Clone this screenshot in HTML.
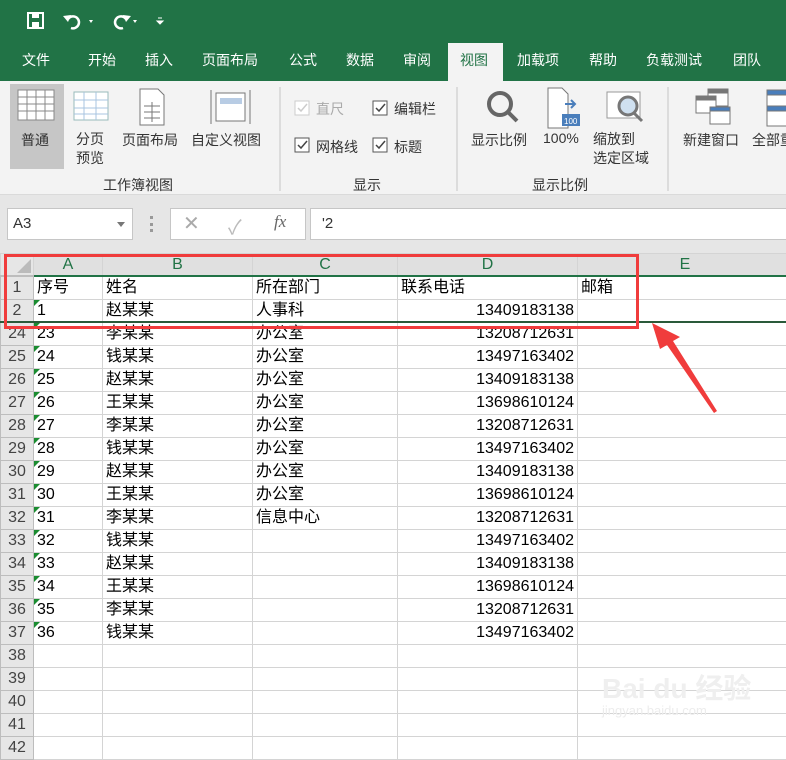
<!DOCTYPE html>
<html><head><meta charset="utf-8">
<style>
*{margin:0;padding:0;box-sizing:border-box}
body{width:786px;height:739px;overflow:hidden;background:#fff;font-family:"Liberation Sans","Noto Sans CJK SC",sans-serif;position:relative}
.g{position:absolute;left:0;top:0;width:786px;height:81px;background:#217346}
.tab{position:absolute;top:50px;color:#fff;font-size:14px}
.ab{position:absolute}
.rib{position:absolute;left:0;top:81px;width:786px;height:114px;background:#f3f3f3;border-bottom:1px solid #dadada}
.t{position:absolute;font-size:14px;color:#333;white-space:nowrap}
.fb{position:absolute;left:0;top:195px;width:786px;height:58px;background:#e6e6e6}
.box{position:absolute;background:#fff;border:1px solid #c6c6c6}
.grid{position:absolute;left:0;top:253px}
table{border-collapse:collapse;table-layout:fixed;width:792px;font-size:16px;font-family:"Liberation Sans","Noto Sans CJK SC",sans-serif}
td{border:1px solid #d4d4d4;height:23px;padding:0 3px;white-space:nowrap;overflow:hidden;line-height:21px}
td.h{background:#e6e6e6;color:#444;text-align:center;padding:0;border-color:#bdbdbd}
tr.ch td{height:21px;background:#e0e0e0;color:#217346;text-align:center;border-bottom:2px solid #217346;font-size:16px}
td.r{text-align:right}
td.n{position:relative}
td.n:before{content:"";position:absolute;left:0;top:0;border-top:6px solid #1a8c30;border-right:6px solid transparent}
td.dd{border-right:1px dashed #888}
</style></head><body>
<div class="g"></div>
<svg class="ab" style="left:26px;top:10px" width="150" height="22" viewBox="0 0 150 22">
<rect x="2" y="3" width="15" height="15" fill="none" stroke="#fff" stroke-width="2"/><rect x="6" y="3" width="7" height="5" fill="#fff"/><rect x="6" y="12" width="7" height="6" fill="#fff"/>
<path d="M42 9 a6 6 0 1 1 3 9" fill="none" stroke="#fff" stroke-width="2.5"/><path d="M37 6 l5 6 l3 -7z" fill="#fff"/>
<path d="M63 10 l4 0 l-2 3z" fill="#fff"/>
<path d="M100 9 a6 6 0 1 0 -3 9" fill="none" stroke="#fff" stroke-width="2.5"/><path d="M105 6 l-5 6 l-3 -7z" fill="#fff"/>
<path d="M107 10 l4 0 l-2 3z" fill="#fff"/>
<path d="M132 8 h4 M131 11 l3 3 l3 -3z" stroke="#fff" fill="#fff"/>
</svg>
<div class="tab" style="left:22px">文件</div><div class="tab" style="left:88px">开始</div><div class="tab" style="left:145px">插入</div><div class="tab" style="left:202px">页面布局</div><div class="tab" style="left:289px">公式</div><div class="tab" style="left:346px">数据</div><div class="tab" style="left:403px">审阅</div>
<div class="ab" style="left:448px;top:43px;width:55px;height:38px;background:#f3f3f3"></div>
<div class="tab" style="left:460px;color:#217346">视图</div><div class="tab" style="left:517px">加载项</div><div class="tab" style="left:589px">帮助</div><div class="tab" style="left:646px">负载测试</div><div class="tab" style="left:733px">团队</div>
<div class="rib"></div>
<div class="ab" style="left:10px;top:84px;width:54px;height:85px;background:#c6c6c6"></div>
<svg class="ab" style="left:0;top:84px" width="786" height="110">
<g stroke="#888" fill="#fff"><rect x="18" y="6" width="36" height="30"/><path d="M18 13h36M18 20h36M18 27h36M27 6v30M36 6v30M45 6v30" fill="none"/></g>
<g stroke="#9bb" fill="#fff"><rect x="74" y="8" width="34" height="28"/><path d="M74 16h34M74 24h34M74 30h34M84 8v28M96 8v28" fill="none" stroke="#a8c4e0"/></g>
<g stroke="#777" fill="#fff"><path d="M140 5h18l6 6v30h-24z"/><path d="M144 22h16M144 28h16M144 34h16M152 18v20" fill="none"/></g>
<g stroke="#777" fill="#fff"><rect x="216" y="9" width="29" height="28"/><rect x="220" y="14" width="22" height="6" fill="#b8cce4" stroke="none"/><path d="M211 6v34M250 6v34" fill="none"/></g>
<g stroke="#666" stroke-width="4" fill="none"><circle cx="500" cy="20" r="11"/><path d="M508 28l9 9"/></g>
<g stroke="#777" fill="#fff"><path d="M548 4h14l6 6v34h-20z"/><rect x="562" y="30" width="18" height="12" fill="#4a7ebb" stroke="none"/><path d="M565 20h10M571 16l4 4-4 4" stroke="#4a7ebb" stroke-width="2" fill="none"/></g>
<text x="564" y="40" font-size="8" fill="#fff" font-family="Liberation Sans">100</text>
<g stroke="#999" fill="#fff"><rect x="607" y="8" width="33" height="26"/><circle cx="628" cy="22" r="9" stroke="#777" stroke-width="3" fill="#cfe0f0"/><path d="M634 29l8 8" stroke="#777" stroke-width="3"/></g>
<g fill="#fff" stroke="#777"><rect x="708" y="5" width="20" height="17"/><rect x="696" y="12" width="20" height="17"/><rect x="710" y="23" width="20" height="17"/><rect x="708" y="5" width="20" height="4" fill="#777"/><rect x="696" y="12" width="20" height="4" fill="#777"/><rect x="710" y="23" width="20" height="4" fill="#4a7ebb"/></g>
<g fill="#fff" stroke="#777"><rect x="767" y="6" width="25" height="36"/><rect x="767" y="6" width="25" height="5" fill="#4a7ebb"/><rect x="767" y="22" width="25" height="5" fill="#4a7ebb"/></g>
<path d="M280 3v104M457 3v104M668 3v104" stroke="#c6c6c6"/>
<g fill="#fff" stroke="#555"><rect x="295" y="17" width="14" height="14" stroke="#ccc"/><rect x="373" y="17" width="14" height="14"/><rect x="295" y="54" width="14" height="14"/><rect x="373" y="54" width="14" height="14"/></g>
<g fill="none" stroke-width="1.5"><path d="M298 24l3 3 6-7" stroke="#ccc"/><path d="M376 24l3 3 6-7" stroke="#444"/><path d="M298 61l3 3 6-7" stroke="#444"/><path d="M376 61l3 3 6-7" stroke="#444"/></g>
</svg>
<div class="t" style="left:21px;top:130px">普通</div>
<div class="t" style="left:76px;top:130px;line-height:19px">分页<br>预览</div>
<div class="t" style="left:122px;top:130px">页面布局</div>
<div class="t" style="left:191px;top:130px">自定义视图</div>
<div class="t" style="left:103px;top:175px">工作簿视图</div>
<div class="t" style="left:316px;top:99px;color:#aaa">直尺</div>
<div class="t" style="left:394px;top:99px">编辑栏</div>
<div class="t" style="left:316px;top:137px">网格线</div>
<div class="t" style="left:394px;top:137px">标题</div>
<div class="t" style="left:353px;top:175px">显示</div>
<div class="t" style="left:471px;top:130px">显示比例</div>
<div class="t" style="left:543px;top:130px">100%</div>
<div class="t" style="left:593px;top:130px;line-height:19px">缩放到<br>选定区域</div>
<div class="t" style="left:532px;top:175px">显示比例</div>
<div class="t" style="left:683px;top:130px">新建窗口</div>
<div class="t" style="left:752px;top:130px">全部重</div>
<div class="fb"></div>
<div class="box" style="left:7px;top:208px;width:126px;height:32px"></div>
<div class="t" style="left:13px;top:215px;font-size:15px">A3</div>
<div class="ab" style="left:117px;top:222px;border-top:5px solid #777;border-left:4px solid transparent;border-right:4px solid transparent"></div>
<div class="ab" style="left:150px;top:216px;width:3px;height:16px;border-left:3px dotted #999"></div>
<div class="box" style="left:170px;top:208px;width:136px;height:32px"></div>
<div class="t" style="left:183px;top:211px;font-size:20px;color:#aaa">✕</div>
<div class="t" style="left:228px;top:211px;font-size:20px;color:#bbb">✓</div>
<div class="t" style="left:274px;top:212px;font-size:17px;color:#666;font-style:italic;font-family:'Liberation Serif',serif">fx</div>
<div class="box" style="left:310px;top:208px;width:480px;height:32px"></div>
<div class="t" style="left:322px;top:215px;font-size:15px">'2</div>
<div class="grid"><table>
<colgroup><col style="width:33px"><col style="width:69px"><col style="width:150px"><col style="width:145px"><col style="width:180px"><col style="width:215px"></colgroup>
<tr class="ch"><td style="background:#e6e6e6;border-bottom-color:#bdbdbd;position:relative"><div style="position:absolute;right:2px;bottom:2px;border-bottom:14px solid #bbb;border-left:14px solid transparent"></div></td><td>A</td><td>B</td><td>C</td><td>D</td><td>E</td></tr>
<tr><td class="h">1</td><td>序号</td><td>姓名</td><td>所在部门</td><td>联系电话</td><td class="dd" style="border-right:none">邮箱</td></tr>
<tr style="border-bottom:2px solid #2a5a3a"><td class="h">2</td><td class="n">1</td><td>赵某某</td><td>人事科</td><td class="r dd">13409183138</td><td></td></tr>
<tr><td class="h">24</td><td class="n">23</td><td>李某某</td><td>办公室</td><td class="r dd">13208712631</td><td></td></tr>
<tr><td class="h">25</td><td class="n">24</td><td>钱某某</td><td>办公室</td><td class="r dd">13497163402</td><td></td></tr>
<tr><td class="h">26</td><td class="n">25</td><td>赵某某</td><td>办公室</td><td class="r dd">13409183138</td><td></td></tr>
<tr><td class="h">27</td><td class="n">26</td><td>王某某</td><td>办公室</td><td class="r dd">13698610124</td><td></td></tr>
<tr><td class="h">28</td><td class="n">27</td><td>李某某</td><td>办公室</td><td class="r dd">13208712631</td><td></td></tr>
<tr><td class="h">29</td><td class="n">28</td><td>钱某某</td><td>办公室</td><td class="r dd">13497163402</td><td></td></tr>
<tr><td class="h">30</td><td class="n">29</td><td>赵某某</td><td>办公室</td><td class="r dd">13409183138</td><td></td></tr>
<tr><td class="h">31</td><td class="n">30</td><td>王某某</td><td>办公室</td><td class="r dd">13698610124</td><td></td></tr>
<tr><td class="h">32</td><td class="n">31</td><td>李某某</td><td>信息中心</td><td class="r dd">13208712631</td><td></td></tr>
<tr><td class="h">33</td><td class="n">32</td><td>钱某某</td><td></td><td class="r dd">13497163402</td><td></td></tr>
<tr><td class="h">34</td><td class="n">33</td><td>赵某某</td><td></td><td class="r dd">13409183138</td><td></td></tr>
<tr><td class="h">35</td><td class="n">34</td><td>王某某</td><td></td><td class="r dd">13698610124</td><td></td></tr>
<tr><td class="h">36</td><td class="n">35</td><td>李某某</td><td></td><td class="r dd">13208712631</td><td></td></tr>
<tr><td class="h">37</td><td class="n">36</td><td>钱某某</td><td></td><td class="r dd">13497163402</td><td></td></tr>
<tr><td class="h">38</td><td></td><td></td><td></td><td class="dd"></td><td></td></tr>
<tr><td class="h">39</td><td></td><td></td><td></td><td class="dd"></td><td></td></tr>
<tr><td class="h">40</td><td></td><td></td><td></td><td class="dd"></td><td></td></tr>
<tr><td class="h">41</td><td></td><td></td><td></td><td class="dd"></td><td></td></tr>
<tr><td class="h">42</td><td></td><td></td><td></td><td class="dd"></td><td></td></tr>
</table></div>
<div class="ab" style="left:4px;top:254px;width:635px;height:75px;border:3px solid #f03c3c"></div>
<svg class="ab" style="left:640px;top:315px" width="90" height="105"><path d="M12 8 L40 22 L33 26 L77 96 L74 98 L27 30 L20 34 Z" fill="#f03c3c"/></svg>
<div class="t" style="left:602px;top:667px;font-size:28px;color:#efefef;font-weight:bold">Bai du 经验</div>
<div class="t" style="left:602px;top:703px;font-size:13px;color:#ececec">jingyan.baidu.com</div>
</body></html>
